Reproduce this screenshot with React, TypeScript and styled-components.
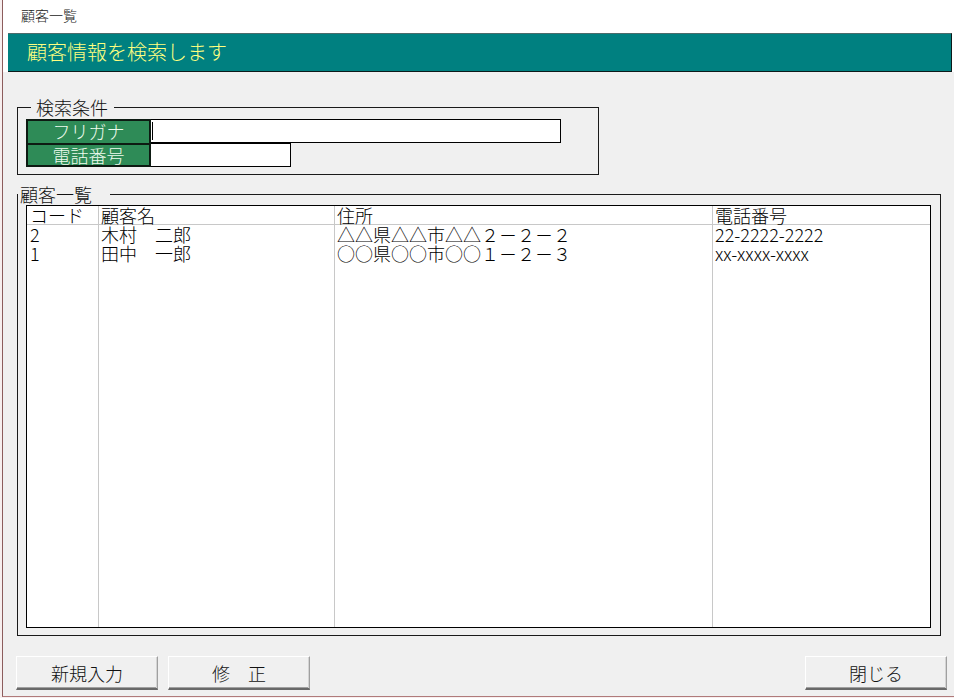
import React from "react";
import styled, { createGlobalStyle } from "styled-components";

const GlobalStyle = createGlobalStyle`
  html, body {
    margin: 0;
    padding: 0;
    background: #ffffff;
  }
  body {
    font-family: "Noto Sans CJK JP", "Noto Sans", sans-serif;
    font-weight: 300;
    color: #000;
  }
`;

const Frame = styled.div`
  width: 954px;
  height: 698px;
  box-sizing: border-box;
  background: #f7efef;
  padding-left: 2px;
  padding-bottom: 1px;
  display: flex;
`;

const Window = styled.div`
  flex: 1;
  display: flex;
  flex-direction: column;
  background: #f0f0f0;
  border-left: 1px solid #8c5c5c;
  border-bottom: 1px solid #b07a7a;
`;

const Top = styled.div`
  background: #ffffff;
  padding: 0 2px 0 5px;
`;

const Caption = styled.div`
  height: 33px;
  padding-left: 13px;
  font-size: 14px;
  line-height: 31px;
  color: #1a1a1a;
`;

const Banner = styled.div`
  height: 39px;
  box-sizing: border-box;
  background: #008080;
  border-top: 1px solid #4b6b6b;
  border-bottom: 1px solid #0c1a1a;
  border-right: 1px solid #0c1a1a;
  padding-left: 19px;
  color: #ffff80;
  font-size: 20px;
  line-height: 36px;
`;

const Body = styled.div`
  flex: 1;
  display: flex;
  flex-direction: column;
  padding: 0 7px 0 14px;
`;

const Group = styled.fieldset<{ $width: number; $top: number; $grow?: boolean }>`
  width: ${p => p.$width}px;
  box-sizing: border-box;
  margin: ${p => p.$top}px 0 0 0;
  padding: 0;
  border: 1px solid #1a1a1a;
  min-width: 0;
  display: flex;
  flex-direction: column;
  ${p => (p.$grow ? "flex: 1;" : "")}
`;

const Legend = styled.legend<{ $inset: number; $before: number; $after: number }>`
  margin-left: ${p => p.$inset}px;
  padding: 0 ${p => p.$after}px 0 ${p => p.$before}px;
  font-size: 18px;
  line-height: 18px;
  color: #111;
`;

const SearchGrid = styled.div`
  display: grid;
  grid-template-columns: 125px auto;
  grid-template-rows: 24px 24px;
  justify-content: start;
  margin: 3px 0 7px 8px;
`;

const FieldLabel = styled.div<{ $last?: boolean }>`
  background: #2e8b57;
  border: 2px solid #0d1a12;
  border-bottom: ${p => (p.$last ? "2px solid #0d1a12" : "none")};
  color: #eefbee;
  font-size: 18px;
  line-height: 21px;
  text-align: center;
`;

const Field = styled.div<{ $width: number }>`
  width: ${p => p.$width}px;
  background: #ffffff;
  border: 1px solid #000;
  border-left: none;
  box-sizing: border-box;
  display: flex;
  align-items: center;
  padding-left: 1px;
`;

const Caret = styled.span`
  width: 1px;
  height: 18px;
  background: #000;
`;

const ListView = styled.div`
  flex: 1;
  margin: 2px 9px 7px 8px;
  background: #ffffff;
  border: 1px solid #000;
  display: flex;
`;

const Column = styled.div<{ $width: number; $last?: boolean }>`
  width: ${p => p.$width}px;
  box-sizing: border-box;
  border-right: ${p => (p.$last ? "none" : "1px solid #c8c8c8")};
  display: flex;
  flex-direction: column;
`;

const HeadCell = styled.div<{ $pad: number }>`
  height: 19px;
  box-sizing: border-box;
  border-bottom: 1px solid #c8c8c8;
  padding-left: ${p => p.$pad}px;
  font-size: 18px;
  line-height: 18px;
  white-space: nowrap;
`;

const Cell = styled.div<{ $pad: number }>`
  height: 19px;
  padding-left: ${p => p.$pad}px;
  font-size: 18px;
  line-height: 19px;
  white-space: nowrap;
`;

const ButtonBar = styled.div`
  display: flex;
  justify-content: space-between;
  margin: 20px 0 6px -1px;
`;

const ButtonGroup = styled.div`
  display: flex;
  gap: 10px;
`;

const Button = styled.button`
  width: 142px;
  height: 34px;
  box-sizing: border-box;
  background: #f0f0f0;
  border: none;
  border-top: 1px solid #ffffff;
  border-left: 1px solid #ffffff;
  border-right: 1px solid #a0a0a0;
  border-bottom: 2px solid #696969;
  box-shadow: inset -1px 0 0 #d4d4d4, inset 0 -1px 0 #a0a0a0;
  font-family: "Noto Sans CJK JP", "Noto Sans", sans-serif;
  font-weight: 300;
  font-size: 18px;
  color: #111;
  padding: 0;
  cursor: pointer;
`;

type Col = { title: string; width: number; pad: number; cells: string[] };

const columns: Col[] = [
  { title: "コード", width: 72, pad: 3, cells: ["2", "1"] },
  { title: "顧客名", width: 236, pad: 2, cells: ["木村　二郎", "田中　一郎"] },
  {
    title: "住所",
    width: 378,
    pad: 2,
    cells: ["△△県△△市△△２－２－２", "○○県○○市○○１－２－３"],
  },
  { title: "電話番号", width: 217, pad: 2, cells: ["22-2222-2222", "xx-xxxx-xxxx"] },
];

export default function App() {
  return (
    <>
      <GlobalStyle />
      <Frame>
        <Window>
          <Top>
            <Caption>顧客一覧</Caption>
            <Banner>顧客情報を検索します</Banner>
          </Top>
          <Body>
            <Group $width={582} $top={26}>
              <Legend $inset={13} $before={5} $after={6}>
                検索条件
              </Legend>
              <SearchGrid>
                <FieldLabel>フリガナ</FieldLabel>
                <Field $width={410}>
                  <Caret />
                </Field>
                <FieldLabel $last>電話番号</FieldLabel>
                <Field $width={140} />
              </SearchGrid>
            </Group>
            <Group $width={924} $top={10} $grow>
              <Legend $inset={0} $before={2} $after={18}>
                顧客一覧
              </Legend>
              <ListView>
                {columns.map((c, i) => (
                  <Column key={c.title} $width={c.width} $last={i === columns.length - 1}>
                    <HeadCell $pad={c.pad}>{c.title}</HeadCell>
                    {c.cells.map((v, j) => (
                      <Cell key={j} $pad={c.pad}>
                        {v}
                      </Cell>
                    ))}
                  </Column>
                ))}
              </ListView>
            </Group>
            <ButtonBar>
              <ButtonGroup>
                <Button>新規入力</Button>
                <Button>修　正</Button>
              </ButtonGroup>
              <Button>閉じる</Button>
            </ButtonBar>
          </Body>
        </Window>
      </Frame>
    </>
  );
}
